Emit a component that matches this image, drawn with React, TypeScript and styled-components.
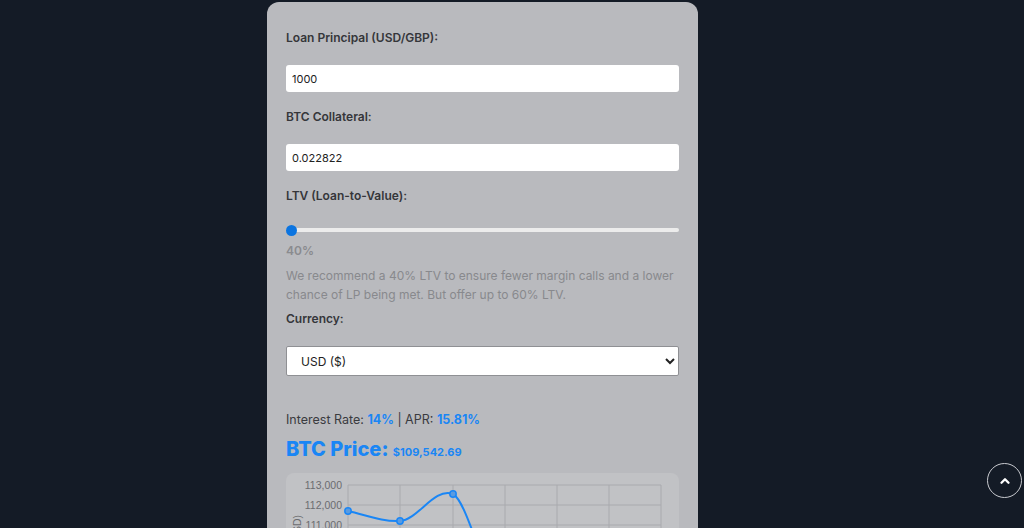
import * as React from 'react';
import styled, { createGlobalStyle } from 'styled-components';

const GlobalStyle = createGlobalStyle`
    html, body {
        margin: 0;
        padding: 0;
        background: #141b26;
        font-family: Inter, "Noto Sans", sans-serif;
    }
    * { box-sizing: border-box; }
`

const yTicks = [113000, 112000, 111000, 110000, 109000, 108000, 107000, 106000, 105000, 104000, 103000, 102000];
const gridX = [62, 114, 167, 219, 271, 323, 375];
const points: [number, number][] = [[62, 38], [114, 48], [167, 21], [219, 140], [271, 170], [323, 150], [375, 160]];

export default function App() {
    const [principal, setPrincipal] = React.useState<string>('1000');
    const [collateral, setCollateral] = React.useState<string>('0.022822');
    const [ltv, setLtv] = React.useState<number>(40);

    return (
        <Page>
            <GlobalStyle />
            <Card>
                <Group>
                    <Label>Loan Principal (USD/GBP):</Label>
                    <TextInput value={principal} onChange={(e) => setPrincipal(e.target.value)} />
                </Group>
                <Group>
                    <Label>BTC Collateral:</Label>
                    <TextInput value={collateral} onChange={(e) => setCollateral(e.target.value)} />
                </Group>
                <Group>
                    <Label>LTV (Loan-to-Value):</Label>
                    <Range type="range" min={40} max={60} value={ltv} onChange={(e) => setLtv(Number(e.target.value))} />
                    <LtvValue>{ltv}%</LtvValue>
                    <Note>We recommend a 40% LTV to ensure fewer margin calls and a lower chance of LP being met. But offer up to 60% LTV.</Note>
                </Group>
                <Group>
                    <Label>Currency:</Label>
                    <Select defaultValue="USD">
                        <option value="USD">USD ($)</option>
                        <option value="GBP">GBP (£)</option>
                    </Select>
                </Group>
                <Rates>
                    Interest Rate: <Accent>14%</Accent> | APR: <Accent>15.81%</Accent>
                </Rates>
                <PriceTitle>
                    BTC Price: <PriceValue>$109,542.69</PriceValue>
                </PriceTitle>
                <ChartBox>
                    <svg width="393" height="300" viewBox="0 0 393 300">
                        {gridX.map((x) => (
                            <line key={x} x1={x} y1={12} x2={x} y2={232} stroke="#a9aaae" strokeWidth="1" />
                        ))}
                        {yTicks.map((t, i) => (
                            <g key={t}>
                                <line x1={62} y1={12 + i * 20} x2={375} y2={12 + i * 20} stroke="#a9aaae" strokeWidth="1" />
                                <text x={56} y={16 + i * 20} textAnchor="end" fontSize="10.5" fill="#6b6c70" fontFamily="'Liberation Sans', Arial, sans-serif">{t.toLocaleString('en-US')}</text>
                            </g>
                        ))}
                        <text transform="translate(15 70) rotate(-90)" textAnchor="middle" fontSize="10.5" fill="#6b6c70" fontFamily="'Liberation Sans', Arial, sans-serif">Price (USD)</text>
                        <path
                            d="M62 38 C80 42 96 49 114 48 C132 47 148 14 167 21 C180 28 195 90 219 140 C236 168 254 172 271 170 C289 166 305 148 323 150 C340 152 358 158 375 160"
                            fill="none"
                            stroke="#1a86f5"
                            strokeWidth="2"
                        />
                        {points.map(([x, y]) => (
                            <circle key={x} cx={x} cy={y} r="3.2" fill="#5a9be0" stroke="#1a86f5" strokeWidth="1.5" />
                        ))}
                    </svg>
                </ChartBox>
            </Card>
            <TopButton aria-label="Scroll to top">
                <svg width="14" height="14" viewBox="0 0 24 24" fill="none" stroke="#ffffff" strokeWidth="4" strokeLinecap="round" strokeLinejoin="round">
                    <polyline points="6 15 12 9 18 15" />
                </svg>
            </TopButton>
        </Page>
    )
}

const Page = styled.div`
    min-height: 100vh;
    padding: 2px 0 0 267px;
`
const Card = styled.div`
    width: 431px;
    background: #b9babe;
    border-radius: 12px;
    padding: 26px 19px 40px 19px;
    display: flex;
    flex-direction: column;
`
const Group = styled.div`
    display: flex;
    flex-direction: column;
    margin-bottom: 15px;
`
const Label = styled.label`
    font-size: 12px;
    font-weight: 600;
    line-height: 20px;
    color: #35363a;
    margin-bottom: 17px;
`
const TextInput = styled.input`
    width: 100%;
    height: 27px;
    border: none;
    border-radius: 3px;
    background: #ffffff;
    padding: 0 6px;
    font-family: Inter, sans-serif;
    font-size: 11px;
    color: #222;
    outline: none;
`
const Range = styled.input`
    -webkit-appearance: none;
    appearance: none;
    width: 100%;
    height: 4px;
    margin: 5px 0 10px 0;
    border-radius: 2px;
    background: #ececec;
    outline: none;
    &::-webkit-slider-thumb {
        -webkit-appearance: none;
        width: 11px;
        height: 11px;
        border-radius: 50%;
        background: #0b74e0;
        cursor: pointer;
    }
`
const LtvValue = styled.span`
    font-size: 12px;
    font-weight: 600;
    color: #8a8b8f;
    line-height: 18px;
`
const Note = styled.p`
    margin: 6px 0 -10px 0;
    font-size: 12px;
    line-height: 19px;
    color: #88898d;
`
const Select = styled.select`
    width: 100%;
    height: 30px;
    border: 1px solid #8f9094;
    border-radius: 2px;
    background: #ffffff;
    padding: 0 8px 0 10px;
    font-family: Inter, sans-serif;
    font-size: 12px;
    color: #222;
`
const Rates = styled.div`
    margin-top: 19px;
    font-size: 12.5px;
    line-height: 20px;
    color: #3a3b3f;
`
const Accent = styled.span`
    color: #1a86f5;
    font-weight: 700;
`
const PriceTitle = styled.h2`
    margin: 6px 0 8px 0;
    font-size: 20px;
    line-height: 26px;
    font-weight: 800;
    color: #1a86f5;
`
const PriceValue = styled.span`
    font-size: 11px;
    font-weight: 700;
`
const ChartBox = styled.div`
    background: #c1c2c5;
    border-radius: 8px;
    height: 300px;
    overflow: hidden;
`
const TopButton = styled.button`
    position: fixed;
    right: 2px;
    bottom: 30px;
    width: 35px;
    height: 35px;
    border-radius: 50%;
    border: 1.5px solid #c9cbd0;
    background: transparent;
    display: flex;
    align-items: center;
    justify-content: center;
    padding: 0;
    cursor: pointer;
`
